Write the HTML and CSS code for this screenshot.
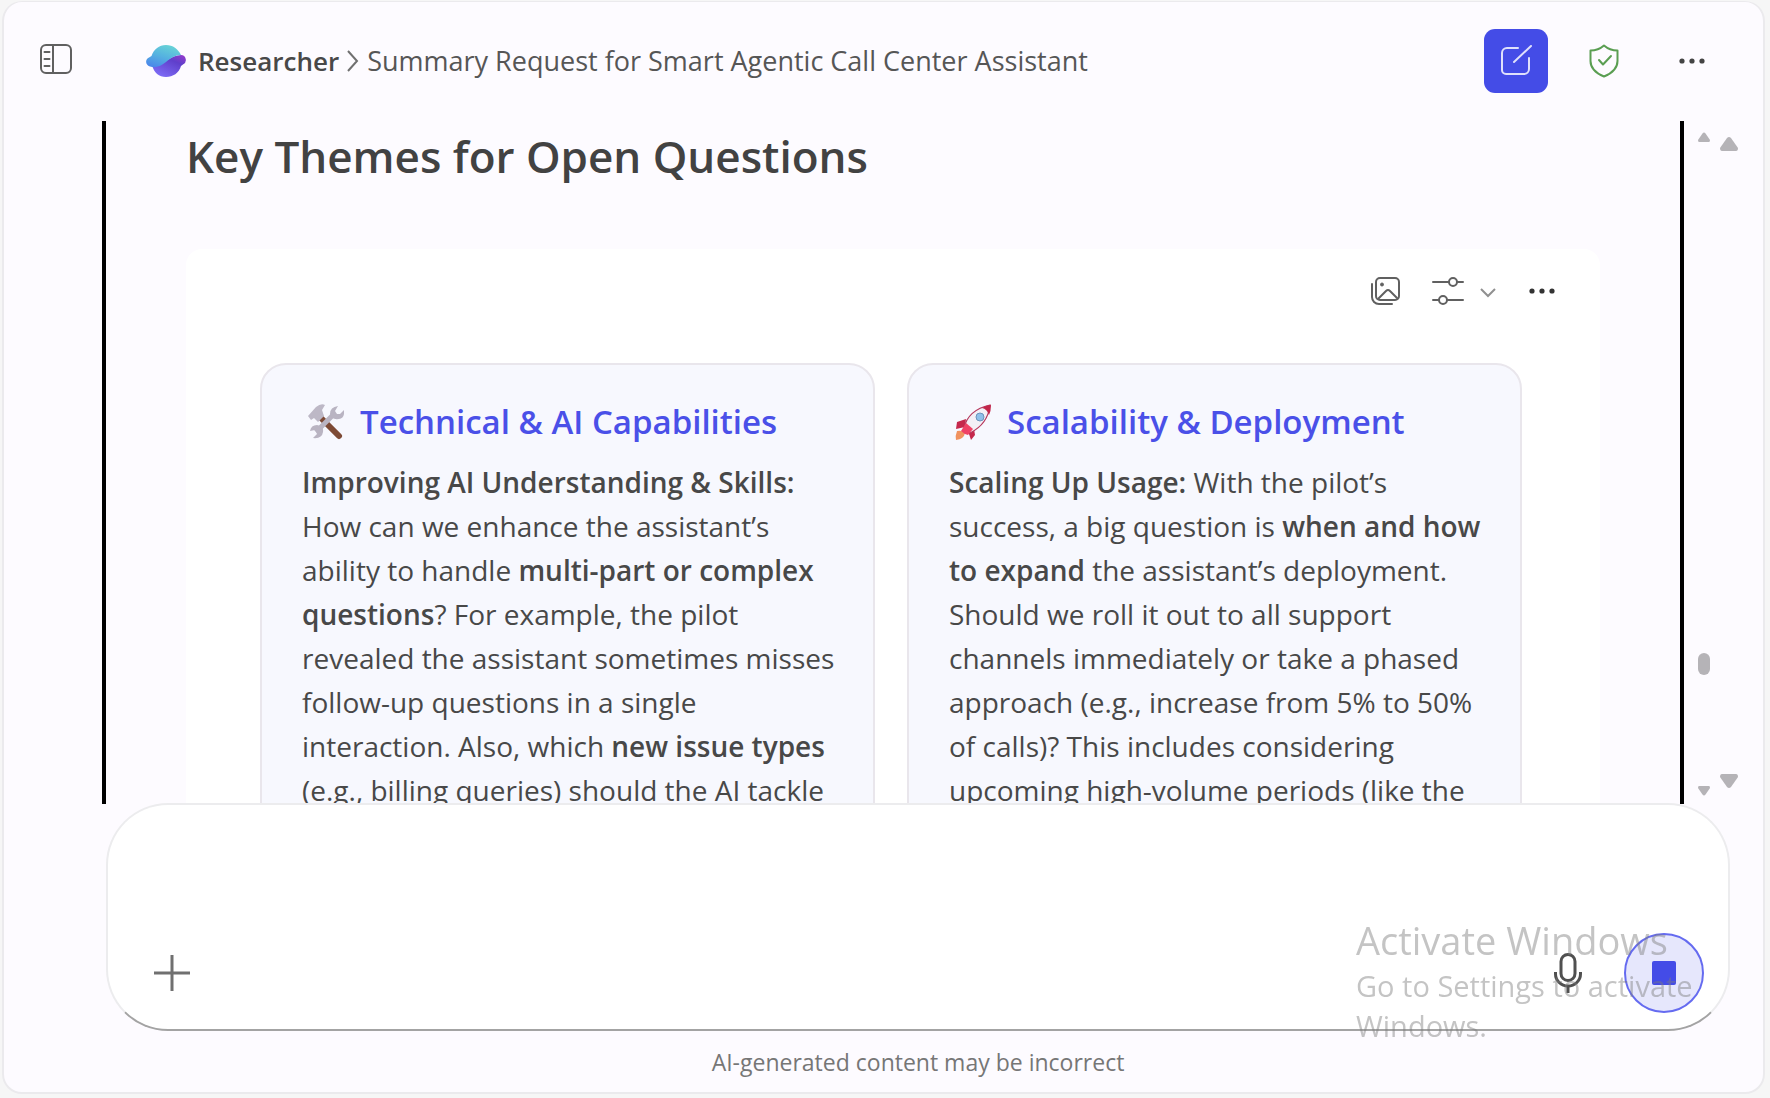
FILE: index.html
```html
<!DOCTYPE html>
<html lang="en">
<head>
<meta charset="utf-8">
<meta name="viewport" content="width=device-width, initial-scale=1">
<title>Researcher</title>
<link rel="stylesheet" href="styles.css">
</head>
<body>
<div class="panel">
  <header class="topbar">
    <button class="icon-btn sidebar-btn" type="button" aria-label="Toggle sidebar">
      <svg width="32" height="34" viewBox="0 0 32 34" fill="none" stroke="#606060" stroke-width="2">
        <rect x="1" y="1" width="30" height="28" rx="5"/>
        <path d="M13 1v28"/>
        <path d="M4.500 8h5M4.500 15h5M4.500 22h5" stroke-linecap="round"/>
      </svg>
    </button>
    <nav class="crumbs" aria-label="Breadcrumb">
      <svg class="logo" width="40" height="32" viewBox="0 0 40 32">
        <defs>
          <linearGradient id="lg-top" x1="0.700" y1="0" x2="0.200" y2="1"><stop offset="0" stop-color="#68d3d6"/><stop offset="0.500" stop-color="#55b2e0"/><stop offset="1" stop-color="#4b86ea"/></linearGradient>
          <linearGradient id="lg-bot" x1="1" y1="0" x2="0.300" y2="1"><stop offset="0" stop-color="#9a3bcc"/><stop offset="0.350" stop-color="#5f3fcb"/><stop offset="1" stop-color="#7d6bf5"/></linearGradient>
        </defs>
        <path d="M6 20C16 22 24 10 35 10a5 5 0 0 1 2 9.500L35 21C33 28 27 32 20 32S8 28 6 20z" fill="url(#lg-bot)"/>
        <path d="M20 0c7 0 12 4 15 10-6 0-10 3-15 7-6 5-11 6-16 4.500C-1 20-1 14 3 12.500L5.500 11C8 4 13 0 20 0z" fill="url(#lg-top)"/>
      </svg>
      <a class="crumb-home" href="#">Researcher</a>
      <svg class="crumb-sep" width="12" height="22" viewBox="0 0 12 22" fill="none" stroke="#707070" stroke-width="2"><path d="M1 1l9 10-9 10"/></svg>
      <span class="crumb-title">Summary Request for Smart Agentic Call Center Assistant</span>
    </nav>
    <div class="top-actions">
      <button class="new-chat" type="button" aria-label="New chat">
        <svg width="32" height="32" viewBox="0 0 32 32" fill="none" stroke="#dfe0fb" stroke-width="2" stroke-linecap="round">
          <path d="M18 3H7a5 5 0 0 0-5 5v17a4 4 0 0 0 4 4h18a5 5 0 0 0 5-5V13"/><path d="M14 17L31 1"/>
        </svg>
      </button>
      <button class="icon-btn" type="button" aria-label="Protected">
        <svg width="30" height="34" viewBox="0 0 30 34" fill="none" stroke="#5a9e52" stroke-width="2" stroke-linejoin="round">
          <path d="M15 1.500C11 5 6 6.500 1.500 6.500V17c0 7 5 12 13.500 15.500C23.500 29 28.500 24 28.500 17V6.500C24 6.500 19 5 15 1.500z"/><path d="M10 16l4 4.500 8-8.500" stroke-linecap="round"/>
        </svg>
      </button>
      <button class="icon-btn" type="button" aria-label="More options">
        <svg width="28" height="8" viewBox="0 0 28 8" fill="#444"><circle cx="4" cy="4" r="2.600"/><circle cx="14" cy="4" r="2.600"/><circle cx="24" cy="4" r="2.600"/></svg>
      </button>
    </div>
  </header>

  <main class="stage">
    <div class="scroller">
      <h1 class="page-title">Key Themes for Open Questions</h1>
      <section class="sheet">
        <div class="toolbar">
          <button class="icon-btn" type="button" aria-label="Images">
            <svg width="30" height="30" viewBox="0 0 30 30" fill="none" stroke="#606060" stroke-width="2">
              <rect x="6" y="2" width="23" height="22" rx="4"/><path d="M2 8v13a7 7 0 0 0 7 7H22" stroke-linecap="round"/><path d="M8 23l8-8q2-2 4 0l8 8"/><circle cx="12" cy="8.500" r="1.500" fill="#606060" stroke-width="1"/>
            </svg>
          </button>
          <button class="icon-btn tune" type="button" aria-label="Adjust">
            <svg width="32" height="30" viewBox="0 0 32 30" fill="none" stroke="#606060" stroke-width="2" stroke-linecap="round">
              <path d="M1 6h16M25 6h6M1 24h6M15 24h16"/><circle cx="21" cy="6" r="4"/><circle cx="11" cy="24" r="4"/>
            </svg>
            <svg class="caret" width="16" height="10" viewBox="0 0 16 10" fill="none" stroke="#909090" stroke-width="2"><path d="M1 1l7 7 7-7"/></svg>
          </button>
          <button class="icon-btn" type="button" aria-label="More">
            <svg width="28" height="8" viewBox="0 0 28 8" fill="#333"><circle cx="4" cy="4" r="2.600"/><circle cx="14" cy="4" r="2.600"/><circle cx="24" cy="4" r="2.600"/></svg>
          </button>
        </div>
        <div class="cards">
          <article class="card">
            <h2 class="card-title">
              <svg width="36" height="36" viewBox="0 0 36 36">
                <path d="M14 15L31 32" stroke="#7d4a35" stroke-width="6" stroke-linecap="round"/>
                <path d="M8 28L27 9" stroke="#b9b4c2" stroke-width="5"/>
                <path d="M30 2l-3 5 2 3h3l4-4q1 8-5 9-8 1-9-5 0-7 8-8zM5 34l4-4-2-4-5 1q1-6 7-6 7 1 6 7-1 7-10 6z" fill="#b9b4c2"/>
                <path d="M0 12L8 3q5-4 9-2l-3 5 2 6-6 6-4-4-3 2z" fill="#bdb8c6"/>
              </svg>
              Technical &amp; AI Capabilities
            </h2>
            <p class="card-text"><strong>Improving AI Understanding &amp; Skills:</strong> How can we enhance the assistant’s ability to handle <strong>multi-part or complex questions</strong>? For example, the pilot revealed the assistant sometimes misses follow-up questions in a single interaction. Also, which <strong>new issue types</strong> (e.g., billing queries) should the AI tackle</p>
          </article>
          <article class="card">
            <h2 class="card-title">
              <svg width="36" height="36" viewBox="0 0 36 36">
                <path d="M2 27q5-1 8 2-1 6-9 7-1-4 1-9z" fill="#f0925f"/>
                <path d="M11 15l-9 3-1 7 9-2zM19 25l1 6-4 5-3-9z" fill="#c5284c"/>
                <path d="M9 24Q13 6 35 1 33 20 15 29z" fill="#f3eff6" stroke="#b5375c" stroke-width="1.200"/>
                <path d="M27 4q4-3 9-3 0 6-2 10-2-6-7-7z" fill="#c2274b"/>
                <circle cx="25" cy="13" r="4" fill="#8fc0ea" stroke="#6d93bb"/>
                <path d="M6 27l5-8 7 6-5 6q-4-1-7-4z" fill="#ef4266"/>
              </svg>
              Scalability &amp; Deployment
            </h2>
            <p class="card-text"><strong>Scaling Up Usage:</strong> With the pilot’s success, a big question is <strong>when and how to expand</strong> the assistant’s deployment. Should we roll it out to all support channels immediately or take a phased approach (e.g., increase from 5% to 50% of calls)? This includes considering upcoming high-volume periods (like the</p>
          </article>
        </div>
      </section>
    </div>
    <div class="bar bar-inner" aria-hidden="true">
      <svg width="12" height="10" viewBox="0 0 12 10" fill="#b5b3b7"><path d="M4.500 1.500q1.500-2 3 0L12 8q0 2-1 2H1Q0 10 0 8z"/></svg>
      <span class="thumb"></span>
      <svg width="12" height="10" viewBox="0 0 12 10" fill="#b5b3b7"><path d="M4.500 8.500q1.500 2 3 0L12 2q0-2-1-2H1Q0 0 0 2z"/></svg>
    </div>
    <div class="bar bar-outer" aria-hidden="true">
      <svg width="18" height="14" viewBox="0 0 18 14" fill="#b5b3b7"><path d="M7 1q2-2 4 0l7 10q0 3-2 3H2q-2 0-2-3z"/></svg>
      <svg width="18" height="14" viewBox="0 0 18 14" fill="#b5b3b7"><path d="M7 13q2 2 4 0l7-10q0-3-2-3H2Q0 0 0 3z"/></svg>
    </div>
  </main>

  <form class="composer">
    <textarea class="prompt" aria-label="Message"></textarea>
    <div class="composer-row">
      <button class="icon-btn" type="button" aria-label="Add">
        <svg width="36" height="36" viewBox="0 0 36 36" fill="none" stroke="#707070" stroke-width="3"><path d="M18 0v36M0 18h36"/></svg>
      </button>
      <div class="composer-actions">
        <button class="icon-btn" type="button" aria-label="Dictate">
          <svg width="28" height="40" viewBox="0 0 28 40" fill="none" stroke="#505050" stroke-width="3">
            <rect x="7" y="1.500" width="14" height="26" rx="7"/><path d="M1.500 19v2a12.500 12 0 0 0 25 0v-2"/><path d="M14 33v7"/>
          </svg>
        </button>
        <button class="stop" type="button" aria-label="Stop"><span class="stop-mark"></span></button>
      </div>
    </div>
  </form>
  <footer class="note">AI-generated content may be incorrect</footer>
</div>
<aside class="watermark">
  <p class="wm-title">Activate Windows</p>
  <p class="wm-text">Go to Settings to activate Windows.</p>
</aside>
</body>
</html>
```
FILE: styles.css
```css
* { box-sizing: border-box; }

body {
  margin: 0;
  height: 100vh;
  padding: 1px 5px 4px 2px;
  background: #f6f6f6;
  color: #484848;
  font-family: "Open Sans", "Noto Sans", sans-serif;
  overflow: hidden;
}

h1, h2, p { margin: 0; }

.icon-btn, .new-chat, .stop {
  display: flex;
  align-items: center;
  justify-content: center;
  padding: 0;
  border: 0;
  background: none;
  cursor: pointer;
}

.panel {
  display: flex;
  flex-direction: column;
  height: 100%;
  border: 2px solid #ebeaed;
  border-top-width: 1px;
  border-radius: 20px;
  background: #fdfbff;
}

.topbar {
  display: flex;
  align-items: center;
  flex: none;
  height: 119px;
  padding: 0 57px 1px 36px;
}

.sidebar-btn { margin-right: 74px; }

.crumbs {
  display: flex;
  align-items: center;
  flex: 1;
  font-size: 27px;
  line-height: 36px;
  white-space: nowrap;
}

.logo { margin-right: 12px; }
.crumb-home { color: inherit; font-size: 26px; font-weight: 600; text-decoration: none; }
.crumb-sep { margin: 0 8px; }
.crumb-title { color: #565656; }

.top-actions { display: flex; align-items: center; }
.top-actions .new-chat { margin-right: 41px; }
.top-actions .icon-btn + .icon-btn { margin-left: 59px; }

.new-chat {
  width: 64px;
  height: 64px;
  border-radius: 11px;
  background: #444ce7;
}

.stage {
  display: flex;
  flex: 1;
  min-height: 0;
  padding: 0 25px 0 98px;
}

.scroller {
  flex: 1;
  overflow: hidden;
  padding: 0 80px;
  border: solid #000;
  border-width: 0 4px;
}

.page-title {
  padding-top: 3px;
  color: #424242;
  font-size: 44px;
  font-weight: 600;
  line-height: 64px;
}

.sheet {
  margin-top: 61px;
  padding: 22px 78px 0 74px;
  border-radius: 16px;
  background: #fff;
}

.toolbar {
  display: flex;
  align-items: center;
  justify-content: flex-end;
  gap: 32px;
  height: 40px;
  margin-right: -34px;
}

.tune { gap: 16px; }
.caret { margin-top: 4px; }

.cards {
  display: grid;
  grid-template-columns: 1fr 1fr;
  gap: 32px;
  margin-top: 52px;
}

.card {
  height: 600px;
  padding: 33px 36px 0 40px;
  border: 2px solid #e9e6ec;
  border-radius: 26px;
  background: #f7f8fe;
}

.card-title {
  display: flex;
  align-items: center;
  gap: 16px;
  padding-left: 6px;
  color: #4a50e8;
  font-size: 33px;
  font-weight: 600;
  line-height: 48px;
  white-space: nowrap;
}

.card-text {
  margin-top: 14px;
  font-size: 28px;
  line-height: 44px;
}

.card-text strong { font-weight: 600; }

.bar {
  display: flex;
  flex-direction: column;
  justify-content: space-between;
}

.bar-inner { padding: 11px 0 8px; margin-left: 14px; }
.bar-outer { padding: 16px 0; margin-left: 10px; }
.thumb { width: 12px; height: 22px; margin-top: 400px; border-radius: 6px; background: #b5b3b7; }

.composer {
  position: relative;
  display: flex;
  flex-direction: column;
  flex: none;
  height: 228px;
  margin: -1px 33px 0 102px;
  padding: 20px 24px 16px 46px;
  border: 2px solid #ececee;
  border-bottom-color: #a3a3a3;
  border-radius: 62px;
  background: #fff;
}

.prompt {
  flex: 1;
  min-height: 0;
  border: 0;
  outline: 0;
  resize: none;
  background: none;
  font: inherit;
  font-size: 28px;
}

.composer-row, .composer-actions {
  display: flex;
  align-items: center;
  justify-content: space-between;
}

.composer-actions { gap: 42px; }

.stop {
  width: 80px;
  height: 80px;
  border: 2px solid #656bf0;
  border-radius: 50%;
  background: #e6e7fc;
}

.stop-mark { width: 24px; height: 24px; border-radius: 2px; background: #444ce7; }

.note {
  flex: none;
  height: 61px;
  padding-left: 69px;
  color: #767676;
  font-size: 23px;
  line-height: 62px;
  text-align: center;
}

.watermark {
  position: fixed;
  right: 64px;
  bottom: 52px;
  width: 350px;
  color: rgba(125, 125, 125, 0.45);
  pointer-events: none;
}

.wm-title { font-size: 38px; line-height: 51px; white-space: nowrap; }
.wm-text { font-size: 29px; line-height: 40px; }
```
